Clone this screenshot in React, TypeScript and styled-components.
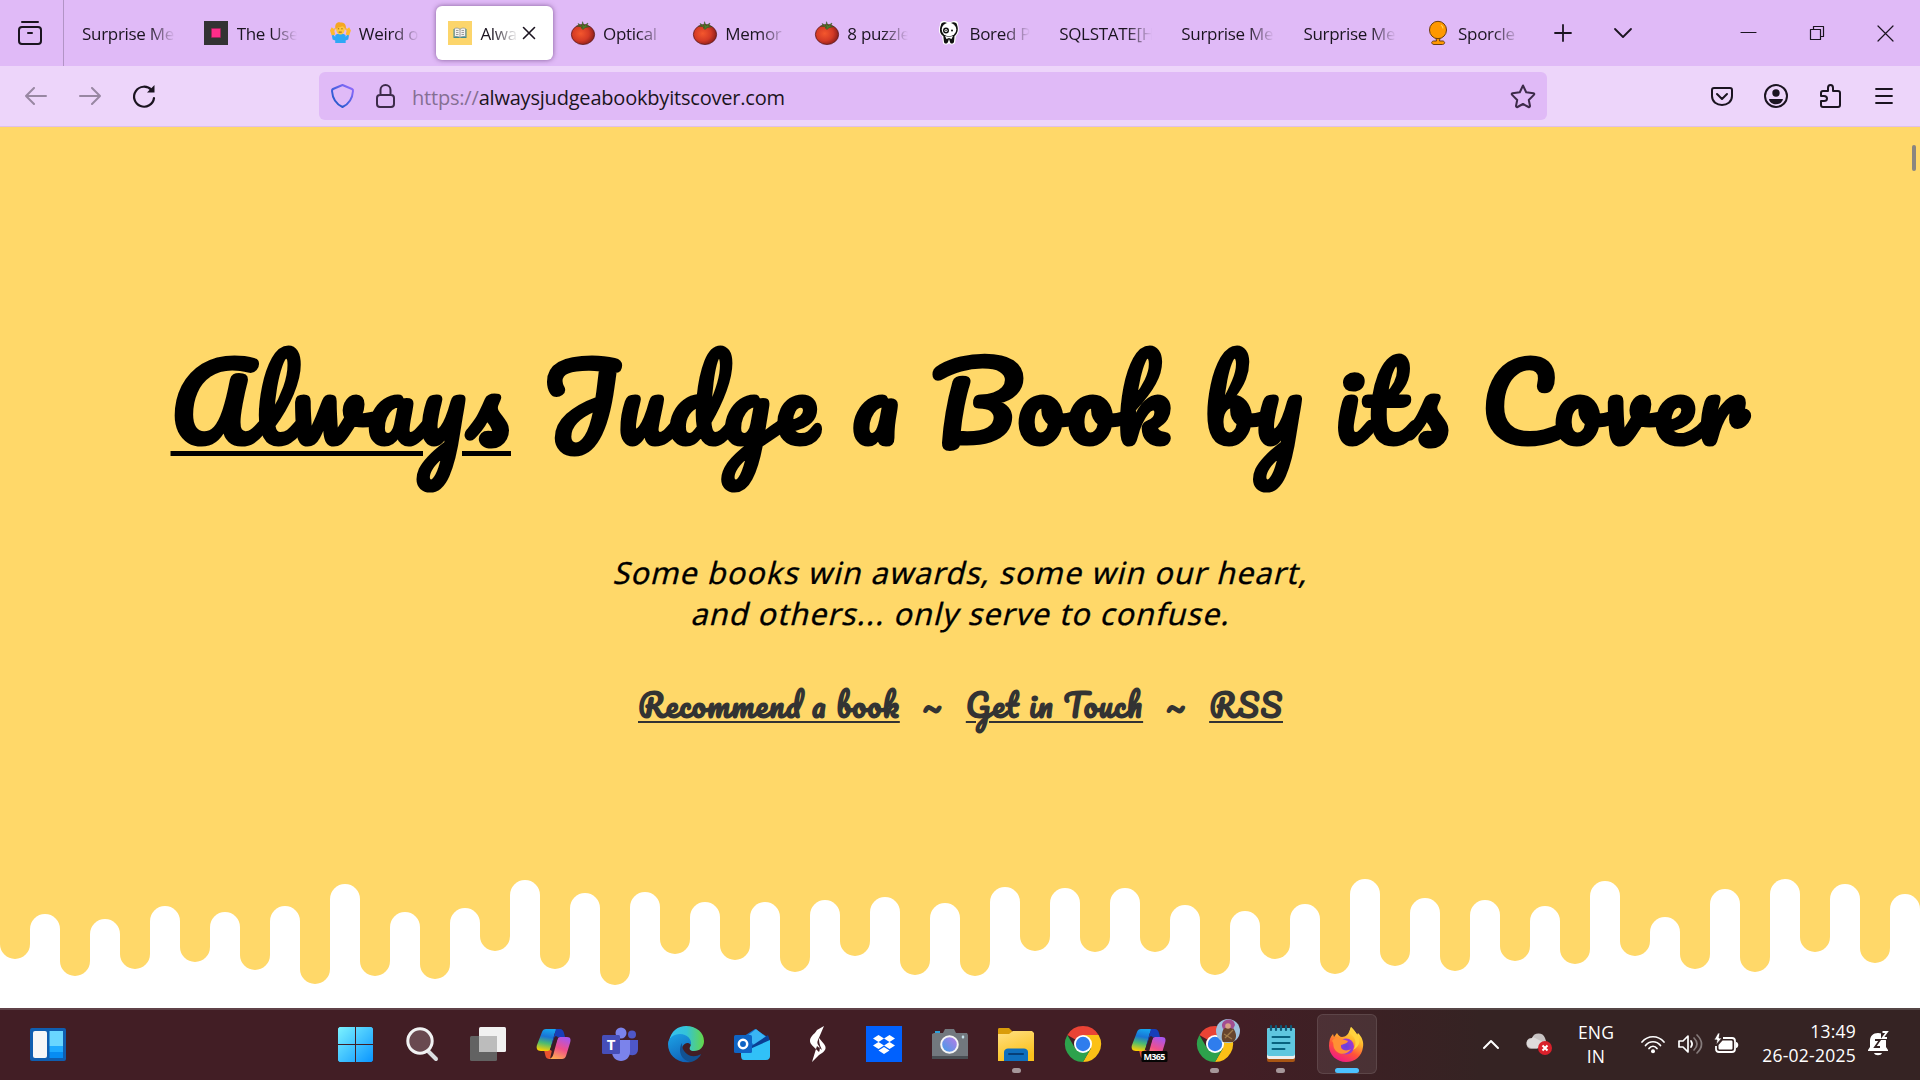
import React from 'react';
import styled, { createGlobalStyle, css } from 'styled-components';

const ink = '#1b1420';
const sand = '#ffd869';

const Global = createGlobalStyle`
  * { box-sizing: border-box; }
  body { margin: 0; overflow: hidden; background: #fff; }
  svg { display: block; flex: none; overflow: visible; }
`;

const Screen = styled.div`
  width: 1920px;
  height: 1080px;
  display: flex;
  flex-direction: column;
  overflow: hidden;
  font-family: 'Open Sans', 'Noto Sans', sans-serif;
  color: ${ink};
`;

/* ---------- tab strip ---------- */
const TabStrip = styled.header`
  height: 66px;
  flex: none;
  display: flex;
  align-items: center;
  background: #e0baf7;
`;
const FirefoxView = styled.div`
  width: 64px;
  height: 66px;
  padding-left: 18px;
  display: flex;
  align-items: center;
  border-right: 1px solid #b294c5;
`;
const Tabs = styled.div`
  display: flex;
  padding-left: 6px;
`;
const TabBox = styled.div<{ $active?: boolean }>`
  width: 117px;
  height: 54px;
  margin-right: 5.15px;
  padding: 0 12px;
  display: flex;
  align-items: center;
  gap: 8.5px;
  border-radius: 6px;
  font-size: 17px;
  letter-spacing: -0.3px;
  ${p => p.$active && css`
    background: #fff;
    box-shadow: 0 0 5px rgba(80, 40, 100, 0.65);
    gap: 8px;
  `}
`;
const TabTitle = styled.span`
  flex: 1;
  min-width: 0;
  overflow: hidden;
  white-space: nowrap;
  -webkit-mask-image: linear-gradient(to left, transparent, #000 26px);
  mask-image: linear-gradient(to left, transparent, #000 26px);
`;
const CloseSlot = styled.span`
  width: 15px;
  margin: 0 6px 0 -6px;
  display: flex;
  justify-content: flex-end;
`;
const StripButton = styled.div<{ $w: number }>`
  width: ${p => p.$w}px;
  display: flex;
  justify-content: center;
`;
const WindowControls = styled.div`
  margin-left: auto;
  display: flex;
  align-items: center;
`;

/* ---------- toolbar ---------- */
const Toolbar = styled.nav`
  height: 61px;
  flex: none;
  display: flex;
  align-items: center;
  padding-left: 9px;
  background: #edd5fa;
  border-bottom: 1px solid #dfc0e8;
`;
const ToolButton = styled.div<{ $faded?: boolean }>`
  width: 54px;
  display: flex;
  justify-content: center;
  opacity: ${p => (p.$faded ? 0.4 : 1)};
`;
const AddressBar = styled.div`
  width: 1228px;
  height: 48px;
  margin-left: 148px;
  padding: 0 12px;
  display: flex;
  align-items: center;
  border-radius: 6px;
  background: #e0baf7;
`;
const AddressIcon = styled.span<{ $w: number }>`
  width: ${p => p.$w}px;
  display: flex;
`;
const Address = styled.span`
  flex: 1;
  padding-top: 2px;
  font-size: 20px;
  letter-spacing: -0.2px;
`;
const Scheme = styled.span`
  color: #856f93;
`;
const ToolbarEnd = styled.div`
  margin-left: auto;
  padding-right: 9px;
  display: flex;
  align-items: center;
`;

/* ---------- page ---------- */
const Page = styled.main`
  position: relative;
  height: 881px;
  flex: none;
  display: flex;
  flex-direction: column;
  align-items: center;
  background: ${sand};
`;
const ScrollThumb = styled.div`
  position: absolute;
  right: 4px;
  top: 18px;
  width: 4px;
  height: 26px;
  border-radius: 2px;
  background: #8a8680;
`;
const Title = styled.h1`
  margin: 198px 0 0;
  padding-left: 2px;
  height: 150px;
  line-height: 150px;
  white-space: nowrap;
  color: #000;
  font-family: Pacifico, cursive;
  font-weight: 700;
  font-size: 103.5px;
  letter-spacing: 2.92px;
  font-feature-settings: 'liga' 1, 'clig' 1, 'calt' 1;
`;
const Always = styled.span`
  text-decoration: underline;
  text-decoration-thickness: 5px;
  text-underline-offset: 7px;
`;
const Tagline = styled.p`
  margin: 77px 0 0;
  padding-left: 5px;
  display: flex;
  flex-direction: column;
  align-items: center;
  color: #000;
  font-family: 'Noto Sans', sans-serif;
  font-size: 30.5px;
  line-height: 41px;
  letter-spacing: 1.08px;
  -webkit-text-stroke: 0.3px #000;
`;
const Slanted = styled.span`
  display: block;
  white-space: nowrap;
  transform: skewX(-14deg);
`;
const Links = styled.div`
  margin-top: 41px;
  padding-left: 1px;
  height: 60px;
  display: flex;
  align-items: center;
  color: #333;
  font-family: Pacifico, cursive;
  font-weight: 700;
  font-size: 31px;
  letter-spacing: 1.2px;
  font-feature-settings: 'liga' 1, 'clig' 1, 'calt' 1;
`;
const PageLink = styled.a`
  white-space: nowrap;
  text-decoration: underline;
  text-decoration-thickness: 2px;
  text-underline-offset: 3px;
`;
const Tilde = styled.span`
  width: 66px;
  text-align: center;
`;
const Drips = styled.div`
  margin-top: auto;
  width: 1920px;
  height: 148px;
  display: flex;
  background: #fff;
`;
const Drip = styled.div<{ $h: number }>`
  width: 30px;
  height: ${p => p.$h}px;
  border-radius: 0 0 15px 15px;
  background: ${sand};
`;
const Gap = styled.div<{ $h: number }>`
  width: 30px;
  background: ${sand};
  padding-top: ${p => p.$h}px;
  &::after {
    content: '';
    display: block;
    height: 100%;
    border-radius: 15px 15px 0 0;
    background: #fff;
  }
`;

/* ---------- taskbar ---------- */
const Taskbar = styled.footer`
  height: 72px;
  flex: none;
  display: flex;
  align-items: center;
  padding: 0 31px 2px 18px;
  border-top: 2px solid rgba(255, 255, 255, 0.16);
  background: #421e25 linear-gradient(90deg, #421e25 0 1240px, #352323 1480px) border-box;
  color: #fff;
`;
const WidgetSlot = styled.div`
  width: 60px;
  display: flex;
  justify-content: center;
`;
const Apps = styled.div`
  margin-left: 247.5px;
  display: flex;
  gap: 6.1px;
`;
const AppSlot = styled.div<{ $active?: boolean }>`
  position: relative;
  width: 60px;
  height: 60px;
  display: flex;
  align-items: center;
  justify-content: center;
  border-radius: 6px;
  border: 1px solid ${p => (p.$active ? 'rgba(255,255,255,.1)' : 'transparent')};
  background: ${p => (p.$active ? 'rgba(255,255,255,.08)' : 'none')};
`;
const Running = styled.i<{ $active?: boolean }>`
  position: absolute;
  bottom: 0;
  width: ${p => (p.$active ? 24 : 9)}px;
  height: 5px;
  border-radius: 3px;
  background: ${p => (p.$active ? '#4cc2ff' : '#a6979a')};
`;
const Tray = styled.div`
  margin-left: auto;
  display: flex;
  align-items: center;
  font-size: 17.5px;
  line-height: 24px;
  letter-spacing: 0.1px;
`;
const TraySlot = styled.div<{ $w: number }>`
  width: ${p => p.$w}px;
  display: flex;
  justify-content: center;
`;
const Language = styled.div`
  width: 66px;
  text-align: center;
`;
const Clock = styled.div`
  width: 106px;
  text-align: right;
  white-space: nowrap;
  letter-spacing: 0.25px;
  margin-top: -2px;
`;
const BellSlot = styled.div`
  margin-left: 12px;
`;

/* ---------- favicons ---------- */
const Tomato = () => (
  <svg width="24" height="24" viewBox="0 0 24 24">
    <defs>
      <radialGradient id="tom" cx=".4" cy=".45" r=".6">
        <stop offset="0" stopColor="#f4572d" /><stop offset=".6" stopColor="#d43a25" /><stop offset="1" stopColor="#8e1f1b" />
      </radialGradient>
    </defs>
    <ellipse cx="12" cy="13.500" rx="11.600" ry="10" fill="url(#tom)" stroke="#5c1a1c" strokeWidth=".8" />
    <path d="M12 6 5.500 5l3 .2L7 2.500l4 2.200.5-4 1.500 4L17 2l-1.500 3.200 3.500.3-5 1.200-2 1.800-2-1.800z" fill="#4d7a2c" stroke="#33501f" strokeWidth=".5" />
  </svg>
);
const Square = () => (
  <svg width="24" height="24" viewBox="0 0 24 24">
    <path fill="#333" d="M0 0h24v24H0z" /><path fill="#ff2d89" stroke="#a3205b" strokeWidth=".6" d="M7.500 7.500h9v9h-9z" />
  </svg>
);
const Shrug = () => (
  <svg width="24" height="24" viewBox="0 0 24 24">
    <g transform="translate(4 2) scale(.87 .83)">
      <path d="M2 14c2 0 3 1 4 3v-2c2-3 10-3 12 0v2c1-2 2-3 4-3l-1 6-3 1v3H6v-3l-3-1z" fill="#2ea8f5" />
      <path d="M0 9 2 5l2 2 2-1-1 4 1 4-4 1zM24 9l-2-4-2 2-2-1 1 4-1 4 4 1z" fill="#ffb92e" />
      <ellipse cx="12" cy="7" rx="5" ry="7" fill="#ffc93b" />
      <path d="M6.500 8C4.500 1 9-2 12-.500 17-2 20 4 17.500 9c0-3-2-5-3.500-5-3 2-6 1-7.500 4z" fill="#f5a623" />
      <path d="M9 7h1.500m2.500 0h1.500M10 11h3.500" stroke="#8a4b14" strokeWidth="1" />
    </g>
  </svg>
);
const BookIcon = () => (
  <svg width="24" height="24" viewBox="0 0 24 24">
    <path fill="#fcd56b" d="M0 0h24v24H0z" />
    <path fill="#3c8e92" d="M5.500 8h13v9h-13z" />
    <path d="M6.500 7.500c2-.8 4-.4 5.500.7 1.500-1.100 3.500-1.500 5.500-.7v8.200c-2-.5-4-.3-5.500.7-1.500-1-3.500-1.200-5.500-.7z" fill="#f3f2ee" stroke="#7b8588" strokeWidth=".6" />
    <path d="M12 8v8.500M8 9.500h2.500M8 11.500h2.500M8 13.500h2.500m3-4H16m-2.500 2H16m-2.500 2H16" stroke="#888" strokeWidth=".8" />
  </svg>
);
const Panda = () => (
  <svg width="24" height="24" viewBox="0 0 24 24">
    <path d="M3 4C2 0 8-1 10 1h4c3-2 8-1 7 3 2 6 0 9-2 11l-1 7c-2 2-5 2-6 0-1 2-5 2-6 0l-1-7C2 13 1 9 3 4z" fill="#fff" />
    <path d="M4 4c0-3 4-3.500 6-2h4c2-1.500 6-1 6 2 2 5 0 9-2.500 11L17 21c-1 2-3.500 2-4 0l-1-3-1 3c-1 2-3.500 2-4 0l-.7-6C3 13 2 9 4 4z" fill="#111" />
    <ellipse cx="12" cy="8.500" rx="7.300" ry="6.800" fill="#fff" />
    <path d="M8 15c3 1 5 1 8 0l-1.500 3-2.500-1-2.500 1z" fill="#fff" />
    <circle cx="9" cy="9.500" r="3" fill="#111" /><circle cx="9" cy="9.500" r="1.500" fill="#fff" /><circle cx="9" cy="9.500" r=".7" /><circle cx="15" cy="9.500" r="1" fill="#111" />
  </svg>
);
const Globe = () => (
  <svg width="24" height="24" viewBox="0 0 24 24">
    <g fill="#ff9800" stroke="#6b3d10" strokeWidth="1">
      <path d="M10 17h4l-.5 3h3.500c2 .5 2.500 3-.5 3.500H8c-3-.5-3-3-.5-3.500h3z" />
      <ellipse cx="12" cy="9" rx="8.500" ry="8.700" />
    </g>
    <path d="M15 4c1.500 1 2 2 2 3.500" stroke="#ffcf4d" fill="none" strokeWidth="1.200" />
  </svg>
);

/* ---------- browser glyphs ---------- */
type LineProps = { d: string; w?: number; h?: number; s?: number; fill?: string; stroke?: string };
const Line = ({ d, w = 24, h = 24, s = 2, fill = 'none', stroke = ink }: LineProps) => (
  <svg width={w} height={h} viewBox={`0 0 ${w} ${h}`}>
    <path d={d} fill={fill} stroke={stroke} strokeWidth={s} strokeLinecap="round" strokeLinejoin="round" />
  </svg>
);

/* ---------- taskbar icons ---------- */
const Widgets = () => (
  <svg width="36" height="33" viewBox="0 0 36 33">
    <rect width="36" height="33" rx="2" fill="#0f5eb0" />
    <rect x="3" y="3" width="14" height="27" rx="2" fill="#f7f7f7" />
    <path fill="#69d6ff" d="M19.500 3H33v15H19.500z" /><path fill="#1eaaff" d="M19.500 18H33v6H19.500z" /><path fill="#078cf2" d="M19.500 24H33v6H19.500z" />
  </svg>
);
const Start = () => (
  <svg width="35" height="35" viewBox="0 0 35 35">
    <defs><linearGradient id="st" x2="1" y2="1"><stop stopColor="#7cf3ff" /><stop offset="1" stopColor="#0a95ff" /></linearGradient></defs>
    <path d="M1.500 0H17v17H0V1.500zM18 0h15.500L35 1.500V17H18zM0 18h17v17H1.500L0 33.500zM18 18h17v15.500L33.500 35H18z" fill="url(#st)" />
  </svg>
);
const Search = () => (
  <svg width="34" height="34" viewBox="0 0 34 34">
    <path d="m23 24 8 8" stroke="#d9dde0" strokeWidth="4" strokeLinecap="round" />
    <circle cx="15" cy="14" r="12.200" fill="#694950" stroke="#f1f2f3" strokeWidth="3" />
  </svg>
);
const TaskView = () => (
  <svg width="36" height="34" viewBox="0 0 36 34">
    <rect y="9" width="27" height="25" rx="1.500" fill="#626262" /><rect x="9" width="27" height="25" rx="1.500" fill="#f1f1f1" /><path fill="#bcbcbc" d="M9 9h18v16H9z" />
  </svg>
);
const Copilot = ({ office }: { office?: boolean }) => (
  <svg width="36" height="36" viewBox="0 0 36 36">
    <defs>
      <linearGradient id="ca" x1=".5" x2=".3" y2="1"><stop stopColor="#16a4ee" /><stop offset=".35" stopColor="#1974d5" /><stop offset=".65" stopColor="#4dbb70" /><stop offset="1" stopColor="#ffd000" /></linearGradient>
      <linearGradient id="cb" x1=".7" x2=".3" y2="1"><stop stopColor="#a856ed" /><stop offset=".5" stopColor="#f0508b" /><stop offset="1" stopColor="#ffab50" /></linearGradient>
    </defs>
    <path d="M8 24h8l-2 9c-3 0-4-1-4.500-3z" fill="#e9522e" />
    <path d="M10 3h14c-4 0-5 3-6 7l-3 11c-1 4-2 4-5 4H5c-4 0-5-3-4-6L6 6c.7-2 2-3 4-3z" fill="url(#ca)" />
    <path d="M20 3h4c2 0 3 1 4 4l1 4h-4c-4 0-5 1-6 4l-4 5 4-13c.7-2 .5-4 1-4z" fill="#173eb9" />
    <path d="M26 33H12c4 0 5-3 6-7l3-11c1-4 2-4 5-4h5c4 0 4 3 3 6l-4 13c-.7 2-2 3-4 3z" fill="url(#cb)" />
    <path d="m20 12-4 11" stroke="#3a1d26" strokeWidth="3.500" strokeLinecap="round" />
    {office && <><rect x="10.500" y="25" width="26" height="11" rx="1.500" fill="#050505" /><text x="23.500" y="34" textAnchor="middle" fill="#fff" fontSize="9" fontWeight="700" fontFamily="Open Sans, sans-serif" textLength="22">M365</text></>}
  </svg>
);
const Teams = () => (
  <svg width="36" height="34" viewBox="0 0 36 34">
    <circle cx="30" cy="7.500" r="4" fill="#4e57c8" /><path d="M26 13h10v9c0 5-4 8-10 5z" fill="#4e57c8" />
    <circle cx="19" cy="6" r="5.500" fill="#7b83eb" /><path d="M10 13h18v12c0 5-4 9-9 9s-9-4-9-9z" fill="#7b83eb" />
    <rect y="8" width="18" height="19" rx="1.500" fill="#464eb8" />
    <text x="9" y="23" fontSize="15" fontWeight="700" fill="#fff" textAnchor="middle" fontFamily="Open Sans, sans-serif">T</text>
  </svg>
);
const Edge = () => (
  <svg width="36" height="36" viewBox="0 0 36 36">
    <defs>
      <linearGradient id="ea"><stop stopColor="#35c1f1" /><stop offset=".5" stopColor="#34c3d8" /><stop offset="1" stopColor="#65d747" /></linearGradient>
      <linearGradient id="eb" x1=".3" x2=".7" y2="1"><stop stopColor="#1b9de2" /><stop offset="1" stopColor="#1062b8" /></linearGradient>
    </defs>
    <path d="M1 15C3 5 10 0 18 0c11 0 18 7 18 15 0 6-4 10-10 10-4 0-5-2-4-4 3-4-2-9-8-9-7 0-13 2-13 3z" fill="url(#ea)" />
    <path d="M0 18C0 12 6 8 12 8c7 0 12 5 11 11-4-5-10 0-9 6 1 5 4 9 9 11C9 38 0 29 0 18z" fill="url(#eb)" />
    <path d="M14 17c-5 8 0 18 9 19 5-1 9-5 10-8-5 3-10 3-14 0-4-3-5-7-5-11z" fill="#125192" />
  </svg>
);
const Outlook = () => (
  <svg width="36" height="32" viewBox="0 0 36 32">
    <path d="M7 10 21 1l14 9v15H7z" fill="#1671ce" /><path d="m12 9 10-8 10 8-10 10z" fill="#39b5f4" /><path d="m16 19 18-12 2 6-18 14z" fill="#0a3e93" />
    <path d="M7 25 36 12v16c0 2-1 4-4 4H10c-3 0-3-3-3-7z" fill="#31c1f7" /><rect y="7" width="18" height="18" rx="1.500" fill="#0f64c4" />
    <circle cx="9" cy="16" r="4.200" fill="none" stroke="#fff" strokeWidth="2.500" />
  </svg>
);
const Slash = () => (
  <svg width="18" height="36" viewBox="0 0 18 36">
    <path d="M15 0 8 4C5 9 1 10 1 15c0 3 3 5 9 11 1-2 1-4 0-6-2-2-2-4-1-6zM10 12l5 6c3 4 2 7-5 11l-7 7 4-13 1-3 5 4c-1-3-3-5-3-12z" fill="#fff" />
  </svg>
);
const Dropbox = () => (
  <svg width="36" height="36" viewBox="0 0 36 36">
    <path fill="#0061fe" d="M0 0h36v36H0z" />
    <path d="m12.500 9 5.500 3.500-5.500 3.500L7 12.500zM23.500 9l5.500 3.500-5.500 3.500-5.500-3.500zM12.500 16l5.500 3.500-5.500 3.500L7 19.500zM23.500 16l5.500 3.500-5.500 3.500-5.500-3.500zM18 21l5.500 3.500L18 28l-5.500-3.500z" fill="#fff" />
  </svg>
);
const CameraIcon = () => (
  <svg width="36" height="30" viewBox="0 0 36 30">
    <defs><linearGradient id="cam" x1="1" x2="0" y2="1"><stop stopColor="#c079e6" /><stop offset="1" stopColor="#389fe8" /></linearGradient></defs>
    <path d="M3 2h5v4H3z" fill="#2aa0dc" /><path d="M2 4h9l2-4h9l2 4h11l1 2v22H0V5z" fill="#72787e" /><path fill="#494e53" d="M0 27h36v3H0z" />
    <circle cx="17.500" cy="15.500" r="8.300" fill="url(#cam)" stroke="#f5f5f5" strokeWidth="2" /><path d="m31 6 1.500 2-1.500 2-1.500-2z" fill="#c8e3ef" />
  </svg>
);
const Explorer = () => (
  <svg width="36" height="33" viewBox="0 0 36 33">
    <defs><linearGradient id="ex" x2=".4" y2="1"><stop stopColor="#ffe083" /><stop offset="1" stopColor="#fbc11c" /></linearGradient></defs>
    <path d="M0 1.500C0 .5.500 0 1.500 0H11l4 4v6H0z" fill="#d99c0a" /><path d="M0 6h11l4-3h19l2 2v28H0z" fill="url(#ex)" />
    <path d="M6 33V24c0-2 2-3.500 4-3.500h16c2 0 4 1.500 4 3.500v9z" fill="#0f6fbd" /><path d="M11 26h14" stroke="#063f78" strokeWidth="2" strokeLinecap="round" />
  </svg>
);
const Chrome = ({ profile }: { profile?: boolean }) => (
  <svg width="36" height="36" viewBox="0 0 36 36">
    <path d="M18 18 2.400 9A18 18 0 0 1 33.600 9z" fill="#ea4335" /><path d="M18 9h15.600A18 18 0 0 1 18 36l7.800-13.500z" fill="#fbc116" />
    <path d="M2.400 9A18 18 0 0 0 18 36l7.800-13.500H10.200z" fill="#2da24c" /><circle cx="18" cy="18" r="9" fill="#fff" /><circle cx="18" cy="18" r="7.200" fill="#2f7ded" />
    {profile && <g><circle cx="31" cy="5" r="12" fill="#9fc0dd" /><path d="M26 16c-3-5 0-12 1-14h9c3 4 5 10 0 14z" fill="#67452e" /><path d="M25 0c-1-7 12-10 13-1l-2 4-5-2-5 2z" fill="#a24d91" /><circle cx="31" cy="0" r="2.800" fill="#d7a186" /><path d="m27 8 8 5m1-9-8 8" stroke="#a17c4c" strokeWidth="1.300" /></g>}
  </svg>
);
const Notepad = () => (
  <svg width="28" height="36" viewBox="0 0 28 36">
    <rect y="2" width="28" height="34" rx="2" fill="#a85513" /><rect y="2" width="28" height="31" rx="2" fill="#eee" /><rect y="2" width="28" height="28" rx="2" fill="#5fc7df" />
    <path d="M4 0v4m5-4v4m5-4v4m5-4v4m5-4v4" stroke="#0e5a78" strokeWidth="2.200" strokeLinecap="round" />
    <path d="M5.500 11h17m-17 6h17m-17 6h12" stroke="#08627f" strokeWidth="2" strokeLinecap="round" />
  </svg>
);
const Firefox = () => (
  <svg width="35" height="35" viewBox="0 0 35 35">
    <defs>
      <linearGradient id="fa" x1=".8" x2=".3" y2="1"><stop stopColor="#fff44f" /><stop offset=".35" stopColor="#ffb52c" /><stop offset=".65" stopColor="#ff5338" /><stop offset="1" stopColor="#ef168a" /></linearGradient>
      <radialGradient id="fb"><stop stopColor="#6340e0" /><stop offset="1" stopColor="#a239ce" /></radialGradient>
    </defs>
    <path d="M22 0c3 3 5 5 6 8l1-2c4 4 6 9 5 14-1 9-8 15-17 15S0 28 0 19c0-5 1-9 4-12l1 3 3-4c1 2 3 4 5 4 4 0 6-3 7-5z" fill="url(#fa)" />
    <circle cx="17" cy="19.500" r="8" fill="url(#fb)" />
    <path d="M3 14c3-5 8-3 10-2l6 2c-1 3-5 3-7 4-1 5 5 7 10 4-4 7-14 6-17-1-1-3 0-5-2-7z" fill="#ff9034" />
    <path d="M20 6c6 3 9 10 4 17 8-4 8-12 3-17l-5-6z" fill="#ffd23e" />
  </svg>
);

/* ---------- tray icons ---------- */
const OneDrive = () => (
  <svg width="26" height="22" viewBox="0 0 26 22">
    <path d="M5 15a5 5 0 0 1 1-10A7 7 0 0 1 19 5l2 6-8 4z" fill="#c8c3c3" /><path d="m7 4 12 6-8 6H6a5 5 0 0 1-1-10z" fill="#ece9e9" opacity=".6" />
    <circle cx="19" cy="15" r="7" fill="#d9202b" /><path d="m16.500 12.500 5 5m0-5-5 5" stroke="#fff" strokeWidth="2" />
  </svg>
);
const Wifi = () => (
  <svg width="24" height="19" viewBox="0 0 24 19" fill="none" stroke="#fff" strokeWidth="1.700" strokeLinecap="round">
    <path d="M1 7c6-7 16-7 22 0M4.500 10.500c4-5 11-5 15 0M8 13.500c2-3 6-3 8 0" /><circle cx="12" cy="16.200" r="2" fill="#fff" stroke="none" />
  </svg>
);
const Speaker = () => (
  <svg width="24" height="20" viewBox="0 0 24 20" fill="none" stroke="#fff" strokeWidth="1.700" strokeLinecap="round" strokeLinejoin="round">
    <path d="M1 7v6h4l5 5V2L5 7zM13 7c1.500 2 1.500 4 0 6" /><path d="M16 4c4 4 4 8 0 12M19 1c6 6 6 12 0 18" opacity=".4" />
  </svg>
);
const Battery = () => (
  <svg width="25" height="20" viewBox="0 0 25 20">
    <path d="M9 4h9c2 0 3 1 3 3v8c0 2-1 3-3 3H5c-2 0-3-1-3-3v-3" fill="none" stroke="#fff" strokeWidth="1.800" /><path d="M8.500 6.500H17c1 0 1.500.5 1.500 1.500v6c0 1-.5 1.500-1.500 1.500H6c-1 0-1.500-.5-1.500-1.500v-3z" fill="#fff" />
    <path d="M22 8c3 0 3 6 0 6z" fill="#fff" /><path d="M4-1 0 6h3L2 11l6-7H5l1-5z" fill="#fff" stroke="#352323" strokeWidth=".8" />
  </svg>
);
const Bell = () => (
  <svg width="21" height="24" viewBox="0 0 21 24">
    <path d="M2 9c0-5 3-8 8-8s8 3 8 8v6l2 3v1H0v-1l2-3zM6 21h8c-1 3-7 3-8 0z" fill="#fff" />
    <path d="M7 8h5l-5 7h5" stroke="#352323" strokeWidth="1.800" fill="none" />
    <path d="M13-2h8v10h-8z" fill="#352323" /><path d="M14.500 0H19l-4.500 6H19" stroke="#fff" strokeWidth="1.800" fill="none" />
  </svg>
);

const tabs: { title: string; icon?: React.ReactNode; active?: boolean }[] = [
  { title: 'Surprise Me' },
  { title: 'The Use', icon: <Square /> },
  { title: 'Weird o', icon: <Shrug /> },
  { title: 'Alwa', icon: <BookIcon />, active: true },
  { title: 'Optical', icon: <Tomato /> },
  { title: 'Memor', icon: <Tomato /> },
  { title: '8 puzzle', icon: <Tomato /> },
  { title: 'Bored P', icon: <Panda /> },
  { title: 'SQLSTATE[H' },
  { title: 'Surprise Me' },
  { title: 'Surprise Me' },
  { title: 'Sporcle', icon: <Globe /> },
];

/* [drip bottom, gap top] for each pair of columns */
const drips = [
  [98.7, 53.5], [115.7, 59], [109.3, 46], [102, 52], [109.5, 46], [123.7, 24], [116, 52], [119.3, 48],
  [90.7, 20], [108.5, 33.3], [125.3, 32], [93.7, 42], [100.3, 42], [111.7, 40], [96, 37], [115.3, 43],
  [115.7, 27], [91, 28], [92.3, 28.3], [92, 45], [115, 51.3], [99, 44], [114, 19], [106, 38],
  [110.7, 39.7], [101, 46], [103.7, 21.3], [96, 56.7], [109, 29], [112, 18.7], [92, 24], [103, 33.7],
];

const apps: { icon: React.ReactNode; running?: boolean; active?: boolean }[] = [
  { icon: <Start /> }, { icon: <Search /> }, { icon: <TaskView /> }, { icon: <Copilot /> }, { icon: <Teams /> },
  { icon: <Edge /> }, { icon: <Outlook /> }, { icon: <Slash /> }, { icon: <Dropbox /> }, { icon: <CameraIcon /> },
  { icon: <Explorer />, running: true }, { icon: <Chrome /> }, { icon: <Copilot office /> },
  { icon: <Chrome profile />, running: true }, { icon: <Notepad />, running: true }, { icon: <Firefox />, running: true, active: true },
];

export default function App() {
  return (
    <Screen>
      <Global />
      <TabStrip>
        <FirefoxView><Line d="M4 1h16M4 6h16q3 0 3 3v11q0 3-3 3H4q-3 0-3-3V9q0-3 3-3zM10 12h4" /></FirefoxView>
        <Tabs>
          {tabs.map((t, i) => (
            <TabBox key={i} $active={t.active}>
              {t.icon}
              <TabTitle>{t.title}</TabTitle>
              {t.active && <CloseSlot><Line w={12} h={12} s={1.6} d="M.5.5l11 11m0-11-11 11" /></CloseSlot>}
            </TabBox>
          ))}
        </Tabs>
        <StripButton $w={54}><Line w={18} h={18} s={1.800} d="M9 1v16M1 9h16" /></StripButton>
        <StripButton $w={67}><Line w={18} h={10} s={1.800} d="m1 1 8 8 8-8" /></StripButton>
        <WindowControls>
          <StripButton $w={68}><Line w={15} h={2} s={1.2} d="M0 .5h15" /></StripButton>
          <StripButton $w={69}><Line w={14} h={14} s={1.2} d="M.5 3.500h10v10H.5zM3.500 3V.5h10v10H11" /></StripButton>
          <StripButton $w={69}><Line w={15} h={15} s={1.2} d="m0 0 15 15M15 0 0 15" /></StripButton>
        </WindowControls>
      </TabStrip>
      <Toolbar>
        <ToolButton $faded><Line w={22} h={18} d="M21 9H1m8-8L1 9l8 8" /></ToolButton>
        <ToolButton $faded><Line w={22} h={18} d="M1 9h20m-8-8 8 8-8 8" /></ToolButton>
        <ToolButton>
          <svg width="22" height="22" viewBox="0 0 22 22"><path d="M18.500 5A10 10 0 1 0 21 13" fill="none" stroke={ink} strokeWidth="2.200" strokeLinecap="round" /><path d="M21.500 0v7.500H14z" fill={ink} /></svg>
        </ToolButton>
        <AddressBar>
          <AddressIcon $w={45}>
            <svg width="23" height="24" viewBox="0 0 23 24">
              <defs><linearGradient id="sh" x1="1" x2="0" y2="1"><stop stopColor="#9a6bff" /><stop offset=".6" stopColor="#3d5fdc" /><stop offset="1" stopColor="#1d55c0" /></linearGradient></defs>
              <path d="M11.500 1 21 5c1 .5 1.200 1 1 2-.5 7-3 12.500-10.500 16C4 19.500 1.500 14 1 7c0-1 0-1.500 1-2z" fill="none" stroke="url(#sh)" strokeWidth="2" strokeLinejoin="round" />
            </svg>
          </AddressIcon>
          <AddressIcon $w={36}><Line w={19} h={24} d="M4 11h11q3 0 3 3v6q0 3-3 3H4q-3 0-3-3v-6q0-3 3-3zM4.500 11V6a5 5 0 0 1 10 0v5" stroke="#3d2b4a" /></AddressIcon>
          <Address><Scheme>https://</Scheme>alwaysjudgeabookbyitscover.com</Address>
          <Line d="M12 1.500 15.200 8.300 22.500 9.300c1 .2 1 1 .4 1.600L17.800 16l1.200 6c0 1-.7 1.400-1.500 1L12 20l-5.500 3c-.8.4-1.500 0-1.500-1l1.200-6-5.100-5.100c-.6-.6-.6-1.400.4-1.600l7.300-1z" stroke="#3d2b4a" />
        </AddressBar>
        <ToolbarEnd>
          <ToolButton><Line w={22} h={19} d="M3 1h16q2 0 2 2v6c0 12-20 12-20 0V3q0-2 2-2zm3 6 5 5 5-5" /></ToolButton>
          <ToolButton>
            <svg width="24" height="24" viewBox="0 0 24 24"><circle cx="12" cy="12" r="11" fill="none" stroke={ink} strokeWidth="2" /><circle cx="12" cy="9" r="3.700" fill={ink} /><path d="M5 15h14c-1 7-13 7-14 0z" fill={ink} /></svg>
          </ToolButton>
          <ToolButton><Line w={21} h={24} d="M3 7h5V4c0-4 5-4 5 0v3h5q2 0 2 2v12q0 2-2 2H3q-2 0-2-2v-4h3c4 0 4-5 0-5H1V9q0-2 2-2z" /></ToolButton>
          <ToolButton><Line w={18} h={14} s={1.800} d="M1 0h16M1 7h16M1 14h16" /></ToolButton>
        </ToolbarEnd>
      </Toolbar>
      <Page>
        <ScrollThumb />
        <Title><Always>Always</Always> Judge a Book by its Cover</Title>
        <Tagline>
          <Slanted>Some books win awards, some win our heart,</Slanted>
          <Slanted>and others... only serve to confuse.</Slanted>
        </Tagline>
        <Links>
          <PageLink>Recommend a book</PageLink><Tilde>~</Tilde>
          <PageLink>Get in Touch</PageLink><Tilde>~</Tilde>
          <PageLink>RSS</PageLink>
        </Links>
        <Drips>
          {drips.map(([d, g], i) => <React.Fragment key={i}><Drip $h={d} /><Gap $h={g} /></React.Fragment>)}
        </Drips>
      </Page>
      <Taskbar>
        <WidgetSlot><Widgets /></WidgetSlot>
        <Apps>
          {apps.map((a, i) => (
            <AppSlot key={i} $active={a.active}>{a.icon}{a.running && <Running $active={a.active} />}</AppSlot>
          ))}
        </Apps>
        <Tray>
          <TraySlot $w={48}><Line w={16} h={9} s={2} stroke="#fff" d="m1 8 7-7 7 7" /></TraySlot>
          <TraySlot $w={48}><OneDrive /></TraySlot>
          <Language>ENG<br />IN</Language>
          <TraySlot $w={48}><Wifi /></TraySlot>
          <TraySlot $w={25}><Speaker /></TraySlot>
          <TraySlot $w={48}><Battery /></TraySlot>
          <Clock>13:49<br />26-02-2025</Clock>
          <BellSlot><Bell /></BellSlot>
        </Tray>
      </Taskbar>
    </Screen>
  );
}
